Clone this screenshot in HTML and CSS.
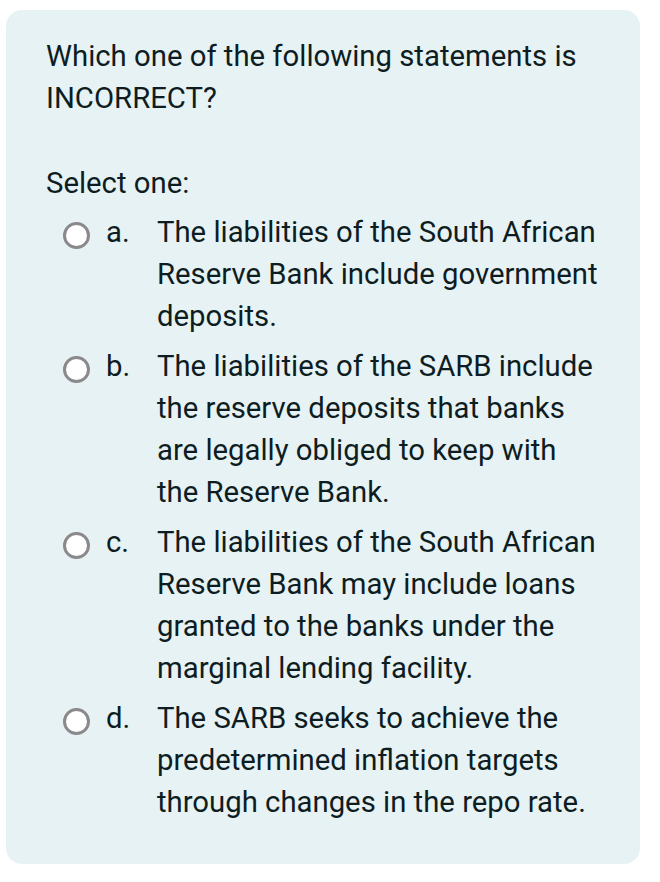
FILE: index.html
```html
<!DOCTYPE html>
<html>
<head>
<meta charset="utf-8">
<link rel="stylesheet" href="styles.css">
</head>
<body>
<div class="card">
  <div class="question">Which one of the following statements is INCORRECT?</div>
  <div class="prompt">Select one:</div>
  <div class="options">
    <div class="option">
      <span class="radio"></span>
      <span class="letter">a.</span>
      <span class="text">The liabilities of the South African Reserve Bank include government deposits.</span>
    </div>
    <div class="option">
      <span class="radio"></span>
      <span class="letter">b.</span>
      <span class="text">The liabilities of the SARB include the reserve deposits that banks are legally obliged to keep with the Reserve Bank.</span>
    </div>
    <div class="option">
      <span class="radio"></span>
      <span class="letter">c.</span>
      <span class="text">The liabilities of the South African Reserve Bank may include loans granted to the banks under the marginal lending facility.</span>
    </div>
    <div class="option">
      <span class="radio"></span>
      <span class="letter">d.</span>
      <span class="text">The SARB seeks to achieve the predetermined inflation targets through changes in the repo rate.</span>
    </div>
  </div>
</div>
</body>
</html>
```
FILE: styles.css
```css
html, body {
  margin: 0;
  padding: 0;
  background: #ffffff;
}
body {
  font-family: Roboto, "Noto Sans", sans-serif;
  font-size: 29.3px;
  line-height: 42px;
  color: #0e1d22;
}
.card {
  margin: 10px 0 0 6px;
  width: 634px;
  box-sizing: border-box;
  background: #e6f2f4;
  border-radius: 16px;
  padding: 25px 40px 41px 40px;
}
.question {
  margin-bottom: 43px;
}
.prompt {
  margin-bottom: 7px;
}
.options {
  display: flex;
  flex-direction: column;
  gap: 8px;
}
.option {
  display: flex;
  align-items: flex-start;
}
.radio {
  flex: none;
  width: 27px;
  height: 27px;
  box-sizing: border-box;
  border: 3px solid #8a898c;
  border-radius: 50%;
  background: #ffffff;
  margin: 11px 0 0 17px;
}
.letter {
  flex: none;
  width: 51px;
  margin-left: 16px;
}
.text {
  flex: 1;
}
```
